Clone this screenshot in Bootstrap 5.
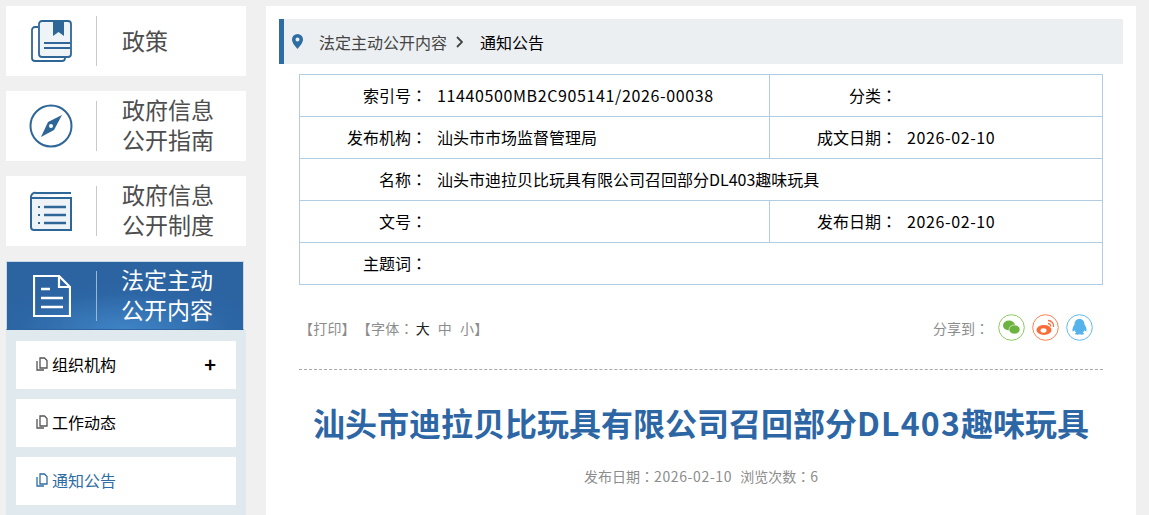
<!DOCTYPE html>
<html lang="zh-CN">
<head>
<meta charset="utf-8">
<title>通知公告</title>
<link href="https://cdn.jsdelivr.net/npm/bootstrap@5.3.0/dist/css/bootstrap.min.css" rel="stylesheet">
<style>
html,body{height:515px;overflow:hidden}
body{background:#f0f0f0;font-family:"Noto Sans CJK SC","Liberation Sans",sans-serif;color:#000;font-size:16px}
.colon{font-family:"Noto Sans CJK TC",sans-serif}
.num{letter-spacing:.62px}
.shell{padding:6px 13px 0 6px;gap:20px;height:515px}
.side{width:240px;flex:none}
.tile{height:70px;background:#fff;margin-bottom:15px;color:#4d4d4d}
.tile-ico{width:90px;flex:none}
.tile-sep{width:1px;height:50px;background:#c9c9c9;flex:none}
.tile-txt{padding-left:25px;padding-bottom:3px;font-size:23px;line-height:30px}
.tile-two{padding-bottom:5px}
.tile-on{background:radial-gradient(ellipse 60% 70% at 50% 100%,#3f84c6 0%,#2d66a5 75%,#2c64a2 100%);color:#fff;height:69px;margin-bottom:0;width:238px;border:1px solid #c8d8e6;border-bottom-color:#2c64a2}
.tile-on .tile-ico{width:89px}
.tile-on .tile-txt{padding-left:24px}
.tile-on .tile-sep{background:#9db7d3}
.sub{background:#dfe9ee;padding:11px 10px 10px}
.sub-item{height:48px;background:#fff;margin-bottom:10px;padding:0 20px 2px;color:#000;font-size:16px}
.sub-item svg{margin-right:4px}
.sub-cur{color:#2e6da4}
.plus{font-size:20px;font-weight:700;line-height:1}
.mainp{background:#fff;flex:1;padding:13px 13px 0;height:509px;overflow:hidden}
.crumb{height:45px;background:#eceff2;border-left:5px solid #2e6da4;padding-left:8px;color:#444;font-size:16px}
.crumb-now{color:#000}
.crumb-arrow{margin:0 17px 0 9px}
.crumb-pin{margin-right:16px}
.inner{padding:0 20px}
.metatbl{margin-top:10px;border:1px solid #b1cde3}
.metarow{height:42px;border-bottom:1px solid #b1cde3}
.metarow:last-child{border-bottom:0;height:41px}
.c-l{width:127px;flex:none;text-align:right;padding-bottom:2px}
.c-v{padding-left:10px;padding-bottom:2px;white-space:nowrap}
.c-left{width:470px;flex:none;border-right:1px solid #b1cde3;height:100%}
.c-l2{width:127px;flex:none;text-align:right;padding-bottom:2px}
.tools{height:85px;border-bottom:1px dashed #aaa;color:#8c8c8c;font-size:14px}
.tools-row{height:84px}
.tools-txt{padding-top:2px;letter-spacing:.2px}
.size-opt{margin-left:8px}
.group-gap{margin-left:8px}
.share{gap:7px;padding-right:10px}
.share-lbl{margin-right:2px;padding-top:2px;color:#8c8c8c}
.tools-b{color:#222;margin-left:2px}
.art-title{color:#2d66a5;font-size:32px;font-weight:700;text-align:center;margin:0;padding-top:29px;padding-bottom:1px;line-height:46px;white-space:nowrap}
.title-lat{letter-spacing:1.2px}
.art-meta{text-align:center;color:#8c8c8c;font-size:14px;margin-top:20px}
</style>
</head>
<body>
<div class="d-flex shell">
  <aside class="side">
    <div class="tile d-flex align-items-center">
      <div class="tile-ico d-flex justify-content-center">
        <svg width="42" height="42" viewBox="0 0 42 42" fill="none" stroke="#2e6697" stroke-width="1.8"><path d="M8 7H5a3 3 0 0 0-3 3v28a3 3 0 0 0 3 3h27a3 3 0 0 0 3-3v-1"/><rect x="9" y="1" width="32" height="36" rx="3" fill="#eef3f8"/><path d="M23 1h11v15l-5.500-4-5.500 4z" fill="#2e6697" stroke="none"/><path d="M14 23h26M14 28h26"/></svg>
      </div>
      <div class="tile-sep"></div>
      <div class="tile-txt">政策</div>
    </div>
    <div class="tile d-flex align-items-center">
      <div class="tile-ico d-flex justify-content-center">
        <svg width="44" height="44" viewBox="0 0 44 44" fill="none"><circle cx="22" cy="22" r="20.500" stroke="#2e6697" stroke-width="2"/><path d="M33 11 25 26 12 33 19 18z" fill="#2e6697"/><circle cx="22" cy="22" r="2" fill="#fff"/></svg>
      </div>
      <div class="tile-sep"></div>
      <div class="tile-txt tile-two">政府信息<br>公开指南</div>
    </div>
    <div class="tile d-flex align-items-center">
      <div class="tile-ico d-flex justify-content-center">
        <svg width="42" height="42" viewBox="0 0 42 42" fill="none" stroke="#2e6697" stroke-width="2"><path d="M41 3H6a4 4 0 0 0-5 4v30a3 3 0 0 0 3 3h37V8H1" fill="#eef3f8"/><path d="M7 3h34"/><path d="M14 17h22M14 25h22M14 33h22" stroke-width="2.500"/><path d="M8 17h2M8 25h2M8 33h2"/></svg>
      </div>
      <div class="tile-sep"></div>
      <div class="tile-txt tile-two">政府信息<br>公开制度</div>
    </div>
    <div class="tile tile-on d-flex align-items-center">
      <div class="tile-ico d-flex justify-content-center">
        <svg width="38" height="42" viewBox="0 0 38 42" fill="none" stroke="#fff" stroke-width="2.200"><path d="M1 1h25l11 11v29H1z"/><path d="M26 1v11h11"/><path d="M8 14h9M8 23h22M8 32h22" stroke-width="2.500"/></svg>
      </div>
      <div class="tile-sep"></div>
      <div class="tile-txt">法定主动<br>公开内容</div>
    </div>
    <div class="sub">
      <div class="sub-item d-flex align-items-center justify-content-between">
        <span class="d-flex align-items-center"><svg width="12" height="14" viewBox="0 0 12 14" fill="none" stroke="#555" stroke-width="1.300"><path d="M4 1h4.500L11 3.500V11H4z"/><path d="M1 4v9h7"/></svg>组织机构</span>
        <span class="plus">+</span>
      </div>
      <div class="sub-item d-flex align-items-center">
        <svg width="12" height="14" viewBox="0 0 12 14" fill="none" stroke="#555" stroke-width="1.300"><path d="M4 1h4.500L11 3.500V11H4z"/><path d="M1 4v9h7"/></svg>工作动态
      </div>
      <div class="sub-item sub-cur d-flex align-items-center">
        <svg width="12" height="14" viewBox="0 0 12 14" fill="none" stroke="#2e6da4" stroke-width="1.300"><path d="M4 1h4.500L11 3.500V11H4z"/><path d="M1 4v9h7"/></svg>通知公告
      </div>
    </div>
  </aside>
  <main class="mainp">
    <div class="crumb d-flex align-items-center">
      <svg class="crumb-pin" width="11" height="15" viewBox="0 0 11 15"><path fill-rule="evenodd" fill="#2e6da4" d="M5.500 0A5.500 5.500 0 0 1 11 5.500C11 9 7.500 12.500 5.500 15 3.500 12.500 0 9 0 5.500A5.500 5.500 0 0 1 5.500 0zm0 3.500a2 2 0 1 0 0 4 2 2 0 0 0 0-4z"/></svg>
      <span>法定主动公开内容</span>
      <svg class="crumb-arrow" width="7" height="12" viewBox="0 0 7 12" fill="none" stroke="#444" stroke-width="1.800"><path d="M1 1l5 5-5 5"/></svg>
      <span class="crumb-now">通知公告</span>
    </div>
    <div class="inner">
      <div class="metatbl">
        <div class="metarow d-flex align-items-center">
          <div class="c-left d-flex align-items-center"><div class="c-l">索引号<span class="colon" lang="zh-TW">：</span></div><div class="c-v num">11440500MB2C905141/2026-00038</div></div>
          <div class="c-l2">分类<span class="colon" lang="zh-TW">：</span></div><div class="c-v"></div>
        </div>
        <div class="metarow d-flex align-items-center">
          <div class="c-left d-flex align-items-center"><div class="c-l">发布机构<span class="colon" lang="zh-TW">：</span></div><div class="c-v">汕头市市场监督管理局</div></div>
          <div class="c-l2">成文日期<span class="colon" lang="zh-TW">：</span></div><div class="c-v num">2026-02-10</div>
        </div>
        <div class="metarow d-flex align-items-center">
          <div class="c-l">名称<span class="colon" lang="zh-TW">：</span></div><div class="c-v">汕头市迪拉贝比玩具有限公司召回部分DL403趣味玩具</div>
        </div>
        <div class="metarow d-flex align-items-center">
          <div class="c-left d-flex align-items-center"><div class="c-l">文号<span class="colon" lang="zh-TW">：</span></div><div class="c-v"></div></div>
          <div class="c-l2">发布日期<span class="colon" lang="zh-TW">：</span></div><div class="c-v num">2026-02-10</div>
        </div>
        <div class="metarow d-flex align-items-center">
          <div class="c-l">主题词<span class="colon" lang="zh-TW">：</span></div><div class="c-v"></div>
        </div>
      </div>
      <div class="tools">
        <div class="tools-row d-flex align-items-center justify-content-between">
          <div class="tools-txt"><span>【打印】</span><span class="group-gap">【字体<span class="colon" lang="zh-TW">：</span><span class="tools-b">大</span></span><span class="size-opt">中</span><span class="size-opt">小】</span></div>
          <div class="d-flex align-items-center share">
            <span class="share-lbl">分享到<span class="colon" lang="zh-TW">：</span></span>
            <svg width="27" height="27" viewBox="0 0 27 27"><circle cx="13.500" cy="13.500" r="12.800" fill="none" stroke="#8cc860"/><ellipse cx="11" cy="11.500" rx="6" ry="5" fill="#6cb33f"/><ellipse cx="16.500" cy="15.500" rx="5.500" ry="4.500" fill="#6cb33f" stroke="#fff" stroke-width=".6"/></svg>
            <svg width="27" height="27" viewBox="0 0 27 27"><circle cx="13.500" cy="13.500" r="12.800" fill="none" stroke="#ff7f50"/><ellipse cx="12" cy="16" rx="7.500" ry="5" fill="#f96c3a"/><ellipse cx="11.500" cy="16.500" rx="3" ry="2.200" fill="#fff"/><path d="M16 6.500a5.500 5.500 0 0 1 5.500 6.500M16 9.500a2.500 2.500 0 0 1 2.500 3" fill="none" stroke="#f96c3a" stroke-width="1.300"/></svg>
            <svg width="27" height="27" viewBox="0 0 27 27"><circle cx="13.500" cy="13.500" r="12.800" fill="none" stroke="#62b8ec"/><path d="M13.500 5c3.500 0 5 2.500 5 5.500 1 1.500 2.500 4 2 6.500-.5 1-1.500 0-2-1-.3 1-.8 2-1.800 2.700 1 .4 1.500.8 1.300 1.300-.5.800-3.500.8-4.500.2-1 .6-4 .6-4.500-.2-.2-.5.300-.9 1.300-1.300-1-.7-1.500-1.700-1.800-2.700-.5 1-1.500 2-2 1-.5-2.500 1-5 2-6.500 0-3 1.500-5.500 5-5.500z" fill="#55b2ea"/></svg>
          </div>
        </div>
      </div>
      <h1 class="art-title">汕头市迪拉贝比玩具有限公司召回部分<span class="title-lat">DL403</span>趣味玩具</h1>
      <div class="art-meta">发布日期<span class="colon" lang="zh-TW">：</span><span class="num">2026-02-10</span><span class="group-gap">浏览次数</span><span class="colon" lang="zh-TW">：</span>6</div>
    </div>
  </main>
</div>
<script src="https://cdn.jsdelivr.net/npm/bootstrap@5.3.0/dist/js/bootstrap.bundle.min.js"></script>
</body>
</html>
